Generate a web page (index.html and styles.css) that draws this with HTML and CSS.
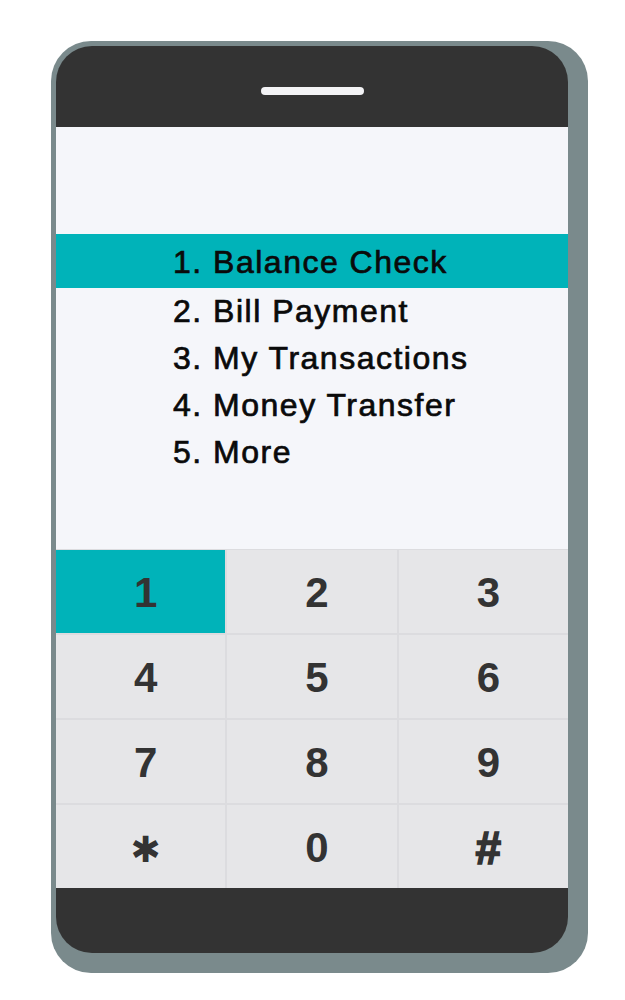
FILE: index.html
```html
<!DOCTYPE html>
<html lang="en">
<head>
<meta charset="utf-8">
<title>USSD Menu</title>
<link rel="stylesheet" href="styles.css">
</head>
<body>
<div class="stage">
  <div class="phone-shadow">
    <div class="phone">
      <div class="phone-top"><span class="speaker"></span></div>
      <div class="screen">
        <ul class="menu">
          <li class="menu-item active">1. Balance Check</li>
          <li class="menu-item">2. Bill Payment</li>
          <li class="menu-item">3. My Transactions</li>
          <li class="menu-item">4. Money Transfer</li>
          <li class="menu-item">5. More</li>
        </ul>
      </div>
      <div class="keypad">
        <div class="key active">1</div>
        <div class="key">2</div>
        <div class="key">3</div>
        <div class="key">4</div>
        <div class="key">5</div>
        <div class="key">6</div>
        <div class="key">7</div>
        <div class="key">8</div>
        <div class="key">9</div>
        <div class="key key-star">✱</div>
        <div class="key">0</div>
        <div class="key key-hash">#</div>
      </div>
      <div class="phone-bottom"></div>
    </div>
  </div>
</div>
</body>
</html>
```

FILE: styles.css
```css
html, body {
  margin: 0;
  padding: 0;
  background: #ffffff;
}

.stage {
  padding: 41px 0 0 51px;
}

.phone-shadow {
  width: 512px;
  padding: 5px 20px 20px 5px;
  background: #7a8a8c;
  border-radius: 40px;
}

.phone {
  width: 512px;
  height: 907px;
  background: #333333;
  border-radius: 36px;
  overflow: hidden;
  display: flex;
  flex-direction: column;
}

.phone-top {
  height: 81px;
  display: flex;
  justify-content: center;
  padding-top: 41px;
  box-sizing: border-box;
}

.speaker {
  display: block;
  width: 103px;
  height: 8px;
  border-radius: 4px;
  background: #f3f3f5;
}

.screen {
  height: 422px;
  background: #f5f6fa;
  padding-top: 107px;
  box-sizing: border-box;
}

.menu {
  list-style: none;
  margin: 0;
  padding: 0;
  font-family: "Liberation Sans", Arial, sans-serif;
  font-size: 32px;
  letter-spacing: 1.5px;
  color: #0a0a0a;
  -webkit-text-stroke: 0.7px #0a0a0a;
}

.menu-item {
  height: 47px;
  line-height: 47px;
  padding-left: 117px;
}

.menu-item.active {
  height: 54px;
  line-height: 56px;
  background: #00b3b9;
}

.keypad {
  height: 339px;
  display: grid;
  grid-template-columns: 1fr 1fr 1fr;
  grid-template-rows: repeat(4, 1fr);
  gap: 2px;
  background: #dcdcdf;
  border-top: 1px solid #dcdcdf;
  box-sizing: border-box;
}

.key {
  background: #e6e6e8;
  display: flex;
  align-items: center;
  justify-content: center;
  padding-left: 10px;
  padding-top: 3px;
  font-family: "Liberation Sans", Arial, sans-serif;
  font-weight: 700;
  font-size: 42px;
  color: #333333;
}

.key.active {
  background: #00b3b9;
}

.key-star {
  font-family: "DejaVu Sans", sans-serif;
  font-size: 36px;
  padding-top: 6px;
}

.key-hash {
  font-size: 46px;
  -webkit-text-stroke: 1.6px #333333;
}

.phone-bottom {
  flex: 1;
}
```
